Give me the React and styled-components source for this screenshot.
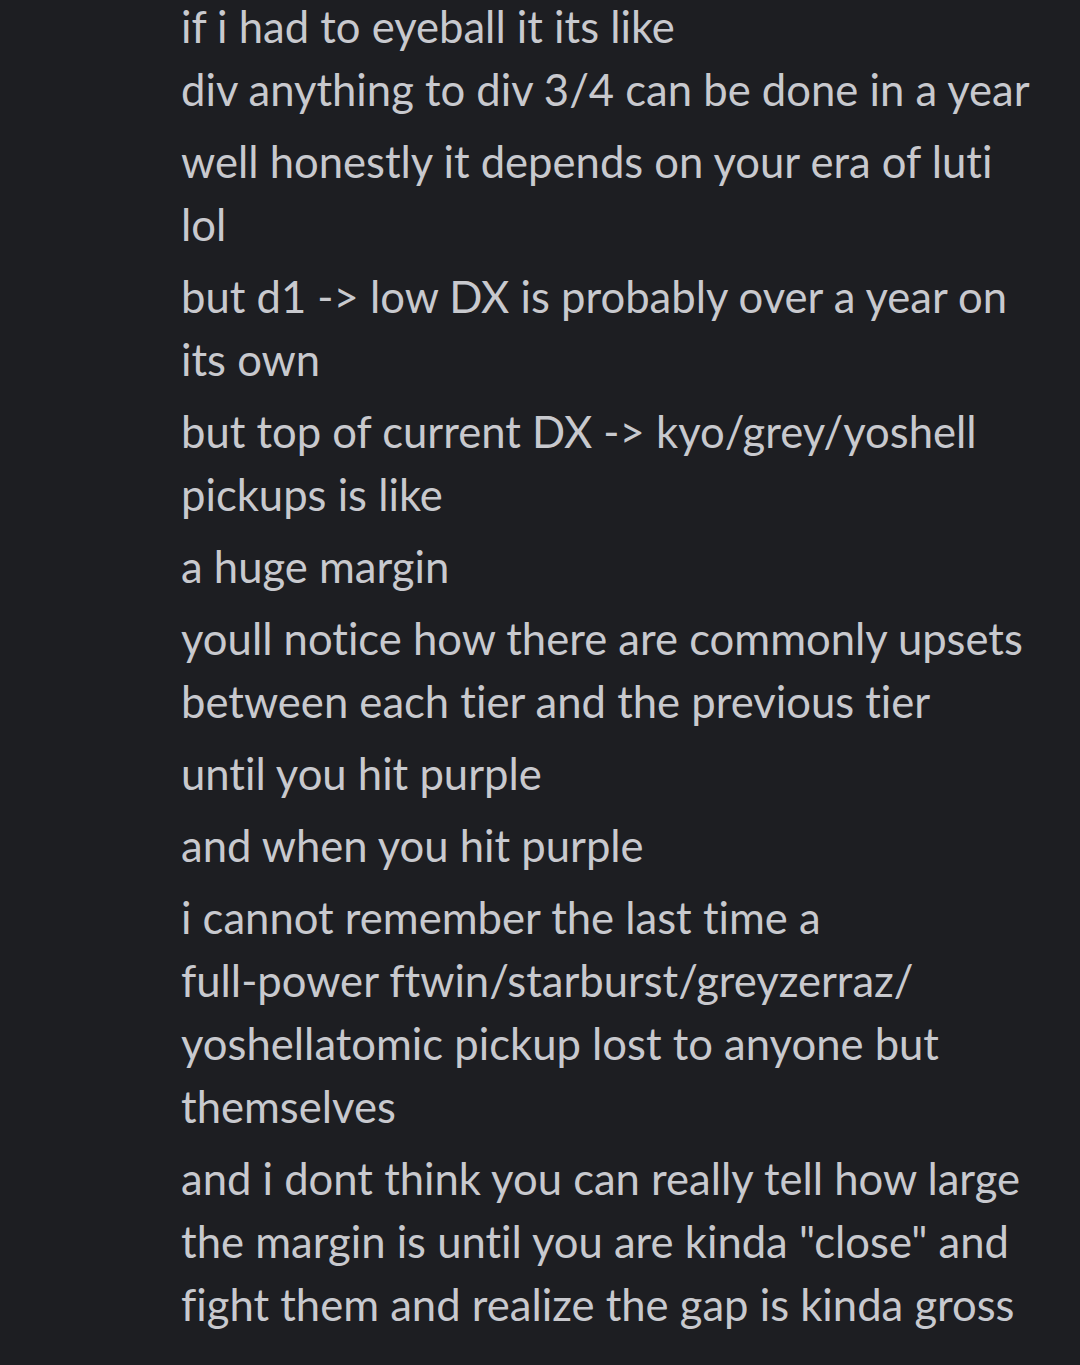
import React from "react";
import styled, { createGlobalStyle } from "styled-components";

const Global = createGlobalStyle`
  html, body { margin: 0; padding: 0; background: #1d1e22; }
  body { overflow: hidden; }
`;

const Chat = styled.div`
  width: 1080px;
  height: 1365px;
  overflow: hidden;
  background: #1d1e22;
  box-sizing: border-box;
  padding: 0 20px 0 181px;
`;

const List = styled.div`
  margin-top: -5px;
  display: flex;
  flex-direction: column;
  gap: 9px;
`;

const Message = styled.div`
  font-family: Lato, "Noto Sans", sans-serif;
  font-size: 43.6px;
  line-height: 63px;
  color: #c8c9ce;
  white-space: pre;
  font-variant-ligatures: none;
  font-feature-settings: "liga" 0, "clig" 0;
`;

const messages = [
  "if i had to eyeball it its like\ndiv anything to div 3/4 can be done in a year",
  "well honestly it depends on your era of luti\nlol",
  "but d1 -> low DX is probably over a year on\nits own",
  "but top of current DX -> kyo/grey/yoshell\npickups is like",
  "a huge margin",
  "youll notice how there are commonly upsets\nbetween each tier and the previous tier",
  "until you hit purple",
  "and when you hit purple",
  "i cannot remember the last time a\nfull-power ftwin/starburst/greyzerraz/\nyoshellatomic pickup lost to anyone but\nthemselves",
  'and i dont think you can really tell how large\nthe margin is until you are kinda "close" and\nfight them and realize the gap is kinda gross',
];

export default function App() {
  return (
    <Chat>
      <Global />
      <List>
        {messages.map((m, i) => (
          <Message key={i}>{m}</Message>
        ))}
      </List>
    </Chat>
  );
}
